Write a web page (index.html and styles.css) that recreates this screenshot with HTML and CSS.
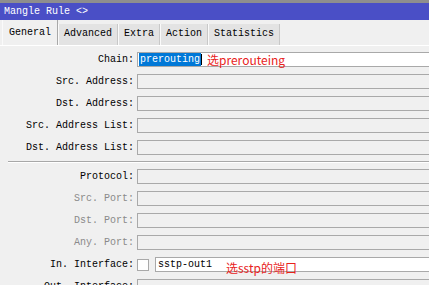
FILE: index.html
```html
<!DOCTYPE html>
<html lang="en">
<head>
    <meta charset="UTF-8">
    <meta name="viewport" content="width=device-width, initial-scale=1.0">
    <title>Mangle Rule</title>
    <link rel="stylesheet" href="styles.css">
</head>
<body>
<div class="window">
    <div class="topline"></div>
    <div class="titlebar">Mangle Rule &lt;&gt;</div>

    <div class="tabs">
        <div class="tab active">General</div>
        <div class="tab">Advanced</div>
        <div class="tab">Extra</div>
        <div class="tab">Action</div>
        <div class="tab">Statistics</div>
    </div>

    <div class="panel">
        <div class="row">
            <label class="label">Chain:</label>
            <div class="field white">
                <span class="selected">prerouting</span><span class="caret"></span>
                <span class="note note-chain">选prerouteing</span>
            </div>
        </div>
        <div class="row">
            <label class="label">Src. Address:</label>
            <div class="field"></div>
        </div>
        <div class="row">
            <label class="label">Dst. Address:</label>
            <div class="field"></div>
        </div>
        <div class="row">
            <label class="label">Src. Address List:</label>
            <div class="field"></div>
        </div>
        <div class="row">
            <label class="label">Dst. Address List:</label>
            <div class="field"></div>
        </div>

        <div class="separator"></div>

        <div class="row">
            <label class="label">Protocol:</label>
            <div class="field"></div>
        </div>
        <div class="row">
            <label class="label disabled">Src. Port:</label>
            <div class="field"></div>
        </div>
        <div class="row">
            <label class="label disabled">Dst. Port:</label>
            <div class="field"></div>
        </div>
        <div class="row">
            <label class="label disabled">Any. Port:</label>
            <div class="field"></div>
        </div>
        <div class="row">
            <label class="label">In. Interface:</label>
            <div class="check"></div>
            <div class="field white">
                <span class="value">sstp-out1</span>
                <span class="note note-iface">选sstp的端口</span>
            </div>
        </div>
        <div class="row">
            <label class="label">Out. Interface:</label>
            <div class="field"></div>
        </div>
    </div>
</div>
</body>
</html>
```

FILE: styles.css
```css
body {
    margin: 0;
    background: #f0f0f0;
    font-family: 'Liberation Mono', 'DejaVu Sans Mono', monospace;
    font-size: 10px;
    color: #000;
    overflow: hidden;
}

.window {
    width: 429px;
    height: 285px;
    overflow: hidden;
}

.topline {
    height: 3px;
    background: #8e8e8e;
}

.titlebar {
    height: 17px;
    line-height: 17px;
    padding-left: 4px;
    background: #4a4fc6;
    color: #fff;
}

.tabs {
    display: flex;
    align-items: flex-end;
    height: 25px;
    padding-left: 2px;
}

.tab {
    height: 21px;
    line-height: 20px;
    padding: 0 5px;
    background: #e3e3e3;
    border-left: 1px solid #fafafa;
    border-right: 1px solid #c8c8c8;
    box-sizing: border-box;
}

.tab.active {
    height: 25px;
    line-height: 26px;
    padding: 0 6px;
    background: #f0f0f0;
    border-right: 1px solid #a8a8a8;
}

.panel {
    border-top: 1px solid #fff;
    padding-top: 6px;
}

.row {
    display: flex;
    align-items: center;
    height: 15px;
    margin-bottom: 7px;
}

.label {
    width: 134px;
    text-align: right;
    white-space: nowrap;
    padding-right: 3px;
}

.label.disabled {
    color: #8a8a8a;
}

.field {
    position: relative;
    flex: 1;
    height: 15px;
    margin-right: -6px;
    border: 1px solid #a9a9a9;
    border-right: none;
    box-sizing: border-box;
    background: #f0f0f0;
    display: flex;
    align-items: center;
    white-space: nowrap;
}

.field.white {
    background: #fff;
}

.selected {
    margin-left: 1px;
    padding: 0 1px;
    background: #0078d7;
    color: #fff;
    line-height: 13px;
}

.caret {
    width: 1px;
    height: 11px;
    background: #000;
}

.value {
    margin-left: 2px;
}

.check {
    width: 12px;
    height: 12px;
    border: 1px solid #a9a9a9;
    box-sizing: border-box;
    background: #fff;
    margin-right: 6px;
}

.separator {
    margin: -1px 0 6px 8px;
    border-top: 1px solid #a8a8a8;
    border-bottom: 1px solid #fff;
}

.note {
    position: absolute;
    font-family: 'Noto Sans CJK SC', sans-serif;
    font-size: 12px;
    color: #e8221c;
}

.note-chain {
    left: 69px;
    top: -2px;
}

.note-iface {
    left: 70px;
    top: 1px;
}
```
